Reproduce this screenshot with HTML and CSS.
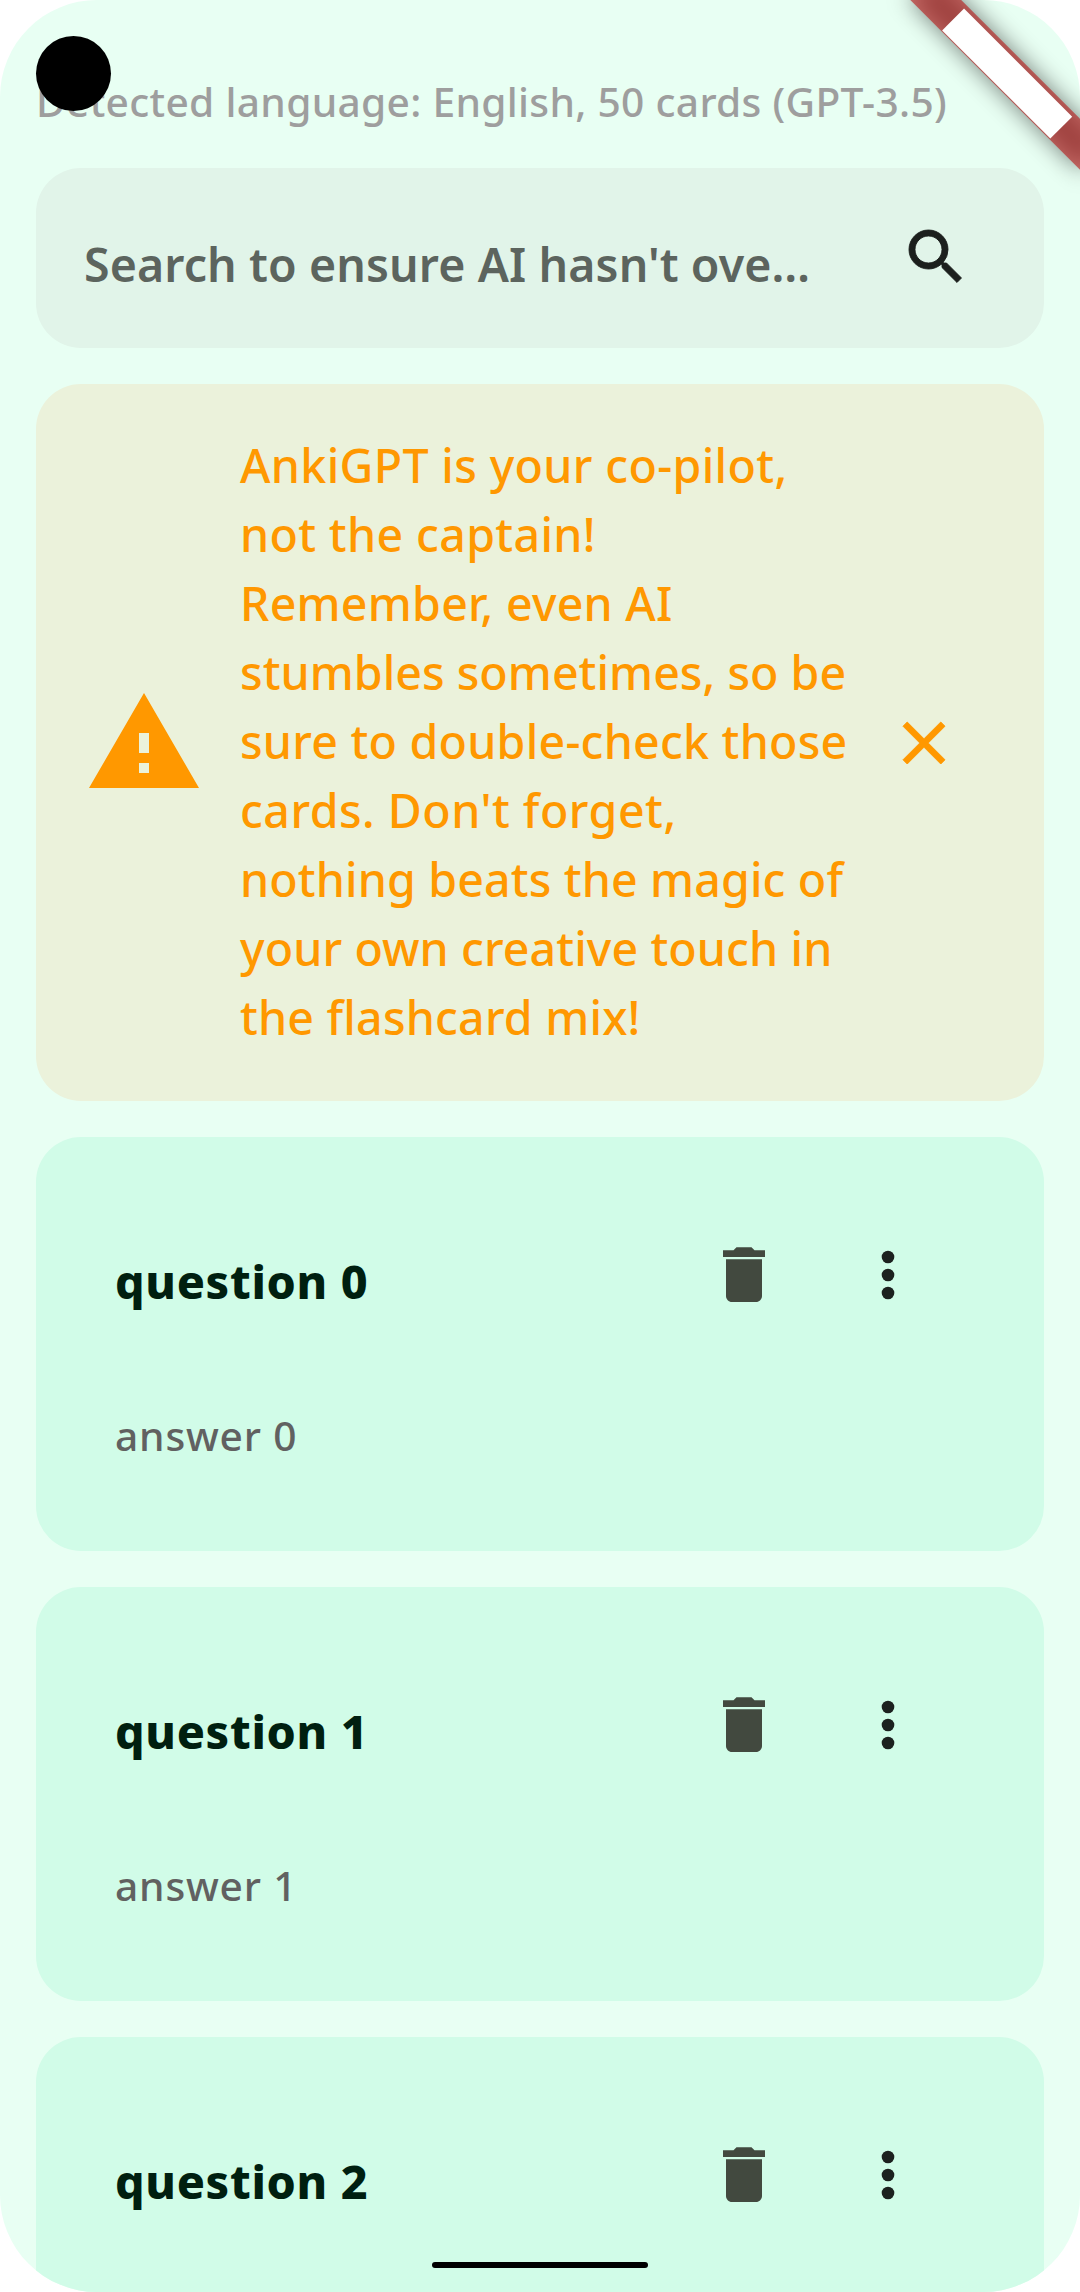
FILE: index.html
```html
<!DOCTYPE html>
<html lang="en">
<head>
<meta charset="utf-8">
<title>AnkiGPT</title>
<link rel="stylesheet" href="styles.css">
</head>
<body>
<svg class="sprite" aria-hidden="true">
  <symbol id="search" viewBox="0 0 24 24"><path d="M15.5 14h-.79l-.28-.27A6.47 6.47 0 0 0 16 9.5 6.5 6.5 0 1 0 9.5 16c1.61 0 3.09-.59 4.23-1.57l.27.28v.79l5 4.99L20.49 19l-4.99-5zm-6 0C7.01 14 5 11.99 5 9.5S7.01 5 9.5 5 14 7.01 14 9.5 11.99 14 9.5 14z"/></symbol>
  <symbol id="warning" viewBox="0 0 24 24"><path d="M1 21h22L12 2 1 21zm12-3h-2v-2h2v2zm0-4h-2v-4h2v4z"/></symbol>
  <symbol id="close" viewBox="0 0 24 24"><path d="M19 6.41 17.59 5 12 10.59 6.41 5 5 6.41 10.59 12 5 17.59 6.41 19 12 13.41 17.59 19 19 17.59 13.41 12z"/></symbol>
  <symbol id="delete" viewBox="0 0 24 24"><path d="M6 19c0 1.1.9 2 2 2h8c1.1 0 2-.9 2-2V6.75H6V19zM19 3.75h-3.5l-1-1h-5l-1 1H5V6h14V3.75z"/></symbol>
  <symbol id="more" viewBox="0 0 24 24"><circle cx="12" cy="6" r="2.1"/><circle cx="12" cy="12" r="2.1"/><circle cx="12" cy="18" r="2.1"/></symbol>
</svg>
<main class="screen">
  <p class="status">Detected language: English, 50 cards (GPT-3.5)</p>

  <section class="panel search">
    <span class="hint">Search to ensure AI hasn't ove…</span>
    <svg class="icon outlined"><use href="#search"/></svg>
  </section>

  <section class="panel notice">
    <svg class="icon icon-large"><use href="#warning"/></svg>
    <p class="message">
      <span>AnkiGPT is your co-pilot,</span>
      <span>not the captain!</span>
      <span>Remember, even AI</span>
      <span>stumbles sometimes, so be</span>
      <span>sure to double-check those</span>
      <span>cards. Don't forget,</span>
      <span>nothing beats the magic of</span>
      <span>your own creative touch in</span>
      <span>the flashcard mix!</span>
    </p>
    <svg class="icon outlined"><use href="#close"/></svg>
  </section>

  <article class="panel card">
    <div class="card-head">
      <h2 class="question">question 0</h2>
      <svg class="icon trash"><use href="#delete"/></svg>
      <svg class="icon"><use href="#more"/></svg>
    </div>
    <p class="answer">answer 0</p>
  </article>
  <article class="panel card">
    <div class="card-head">
      <h2 class="question">question 1</h2>
      <svg class="icon trash"><use href="#delete"/></svg>
      <svg class="icon"><use href="#more"/></svg>
    </div>
    <p class="answer">answer 1</p>
  </article>
  <article class="panel card">
    <div class="card-head">
      <h2 class="question">question 2</h2>
      <svg class="icon trash"><use href="#delete"/></svg>
      <svg class="icon"><use href="#more"/></svg>
    </div>
  </article>

  <div class="ribbon"><div class="ribbon-band"><div class="ribbon-label"></div></div></div>
  <div class="camera"></div>
  <div class="home-bar"></div>
</main>
</body>
</html>
```
FILE: styles.css
```css
* { box-sizing: border-box; }

body {
  margin: 0;
  background: #fff;
  font-family: "Noto Sans", "Open Sans", sans-serif;
}

p, h2 { margin: 0; }

.sprite { display: none; }

.screen {
  position: relative;
  display: flex;
  flex-direction: column;
  gap: 36px;
  width: 1080px;
  height: 2292px;
  padding: 71px 36px 0;
  overflow: hidden;
  background: #e8fff3;
  border-radius: 97px;
}

.status {
  flex: none;
  height: 61px;
  font-size: 40.7px;
  font-weight: 500;
  line-height: 60px;
  letter-spacing: 0.3px;
  white-space: nowrap;
  color: #9e9e9e;
}

.panel {
  flex: none;
  border-radius: 45px;
}

.icon {
  flex: none;
  width: 72px;
  height: 72px;
  fill: currentColor;
}

.outlined {
  stroke: currentColor;
  stroke-width: 0.3px;
}

.icon-large {
  width: 120px;
  height: 120px;
}

/* Search field */
.search {
  display: flex;
  justify-content: space-between;
  align-items: flex-start;
  height: 180px;
  padding: 53px 72px 0 48px;
  background: #e1f4e9;
  color: #1c1f1d;
}

.hint {
  padding-top: 7px;
  font-size: 46.5px;
  font-weight: 600;
  line-height: 72px;
  letter-spacing: 0.1px;
  white-space: nowrap;
  color: #5c645e;
}

/* Warning notice */
.notice {
  display: flex;
  align-items: center;
  height: 717px;
  padding: 0 84px 0 48px;
  background: #ebf2db;
  color: #ff9800;
}

.message {
  flex: 1;
  margin: -2px 0 0 36px;
  font-size: 46.5px;
  font-weight: 500;
  line-height: 69px;
  letter-spacing: 0.35px;
  white-space: nowrap;
}

.message span { display: block; }
.message span:nth-child(3) { letter-spacing: 0.25px; }
.message span:nth-child(4) { letter-spacing: 0.04px; }
.message span:nth-child(5) { letter-spacing: 0.24px; }
.message span:nth-child(6) { letter-spacing: 0.5px; }
.message span:nth-child(7) { letter-spacing: 0.14px; }
.message span:nth-child(8) { letter-spacing: 0.1px; }
.message span:nth-child(9) { letter-spacing: 0.2px; }

/* Flashcards */
.card {
  height: 414px;
  padding: 66px 120px 0 79px;
  background: #d1fce8;
  color: #1c211f;
}

.card-head {
  display: flex;
  align-items: center;
  gap: 72px;
  height: 144px;
}

.question {
  flex: 1;
  padding-top: 12px;
  font-size: 46.5px;
  font-weight: 800;
  line-height: 72px;
  letter-spacing: 0.7px;
  color: #001f10;
}

.trash { color: #42493f; }

.answer {
  margin-top: 58px;
  font-size: 40.7px;
  font-weight: 500;
  line-height: 60px;
  letter-spacing: 0.8px;
  color: #616161;
}

/* Corner ribbon, pivoting on the top right corner of the screen */
.ribbon {
  position: absolute;
  top: 0;
  right: 0;
  width: 0;
  height: 0;
  transform: rotate(45deg);
}

.ribbon::before,
.ribbon-band {
  content: "";
  position: absolute;
  top: 84px;
  left: -120px;
  width: 240px;
  height: 36px;
}

.ribbon::before {
  background: rgba(0, 0, 0, 0.5);
  filter: blur(11.9px);
}

.ribbon-band {
  display: flex;
  justify-content: center;
  align-items: flex-end;
  padding-bottom: 1px;
  background: rgba(183, 28, 28, 0.63);
}

.ribbon-label {
  width: 153px;
  height: 31px;
  background: #fff;
}

/* Device overlays */
.camera {
  position: absolute;
  top: 36px;
  left: 36px;
  width: 75px;
  height: 75px;
  border-radius: 50%;
  background: #000;
}

.home-bar {
  position: absolute;
  bottom: 24px;
  left: 432px;
  width: 216px;
  height: 6px;
  border-radius: 3px;
  background: #000;
}
```
